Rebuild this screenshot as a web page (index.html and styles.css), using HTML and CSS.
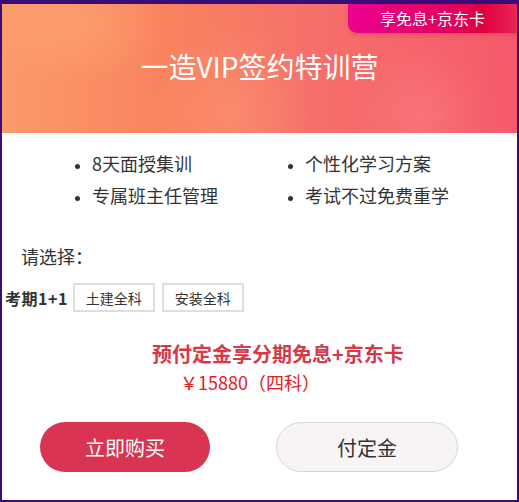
FILE: index.html
```html
<!DOCTYPE html>
<html lang="zh">
<head>
<meta charset="utf-8">
<link rel="stylesheet" href="styles.css">
</head>
<body>
<div class="card">
  <header class="hero">
    <div class="badge">享免息+京东卡</div>
    <h1 class="title">一造VIP签约特训营</h1>
  </header>
  <ul class="features">
    <li>8天面授集训</li>
    <li>个性化学习方案</li>
    <li>专属班主任管理</li>
    <li>考试不过免费重学</li>
  </ul>
  <div class="choose">请选择：</div>
  <div class="options">
    <span class="opt-label">考期1+1</span>
    <button class="opt">土建全科</button>
    <button class="opt">安装全科</button>
  </div>
  <div class="promo">预付定金享分期免息+京东卡</div>
  <div class="price">￥15880（四科）</div>
  <div class="actions">
    <button class="btn btn-buy">立即购买</button>
    <button class="btn btn-deposit">付定金</button>
  </div>
</div>
</body>
</html>
```
FILE: styles.css
```css
html, body {
  margin: 0;
  padding: 0;
}
body {
  background: #3a0c76;
  padding: 4px 2px 2px 2px;
  font-family: "Noto Sans CJK SC", "Noto Sans", sans-serif;
  color: #333;
}
.card {
  background: #fff;
  height: 496px;
  overflow: hidden;
}
.hero {
  position: relative;
  height: 129px;
  display: flex;
  align-items: center;
  justify-content: center;
  background:
    radial-gradient(ellipse 90px 60px at 75px 20px, rgba(255,175,120,0.45), rgba(255,175,120,0)),
    radial-gradient(ellipse 80px 90px at 230px 110px, rgba(255,190,140,0.25), rgba(255,190,140,0)),
    radial-gradient(ellipse 70px 70px at 420px 110px, rgba(255,160,160,0.25), rgba(255,160,160,0)),
    linear-gradient(90deg, #fb9a6a 0%, #f9845e 30%, #f6706a 60%, #f55a6a 100%);
}
.badge {
  position: absolute;
  top: 0;
  right: 0;
  width: 169px;
  height: 29px;
  border-bottom-left-radius: 9px;
  background: linear-gradient(90deg, #ec0090 0%, #e2005a 65%, #df0040 80%, #ea2555 100%);
  color: #fff;
  font-size: 16px;
  line-height: 29px;
  text-align: center;
  box-shadow: 0 2px 4px rgba(150, 30, 60, 0.25);
}
.title {
  margin: 0 0 6px 0;
  font-weight: 400;
  font-size: 28px;
  color: #fff;
}
.features {
  list-style: disc;
  margin: 14px 0 0 0;
  padding: 0 0 0 90px;
  display: grid;
  grid-template-columns: 213px auto;
  font-size: 18px;
  line-height: 32px;
  color: #333;
}
.features li::marker {
  font-size: 14px;
}
.choose {
  margin-top: 33px;
  padding-left: 19px;
  font-size: 18px;
  line-height: 24px;
  color: #333;
}
.options {
  margin-top: 15px;
  padding-left: 3px;
  display: flex;
  align-items: center;
  gap: 7px;
}
.opt-label {
  font-weight: 700;
  font-size: 16px;
  color: #333;
  margin-right: -2px;
  letter-spacing: 0.5px;
}
.opt {
  width: 82px;
  height: 29px;
  border: 2px solid #dedede;
  background: #fff;
  font-family: inherit;
  font-size: 14px;
  color: #333;
  padding: 0;
}
.promo {
  margin-top: 29px;
  padding-left: 150px;
  font-size: 20px;
  font-weight: 700;
  line-height: 26px;
  color: #d63a4a;
}
.price {
  margin-top: 3px;
  padding-left: 178px;
  font-size: 18px;
  line-height: 24px;
  color: #e3201f;
}
.actions {
  margin-top: 28px;
  display: flex;
  padding-left: 38px;
  gap: 66px;
}
.btn {
  height: 50px;
  border-radius: 25px;
  font-family: inherit;
  font-size: 20px;
  padding: 0;
}
.btn-buy {
  width: 170px;
  border: none;
  background: #d93452;
  color: #fff;
}
.btn-deposit {
  width: 182px;
  border: 1px solid #d9d5d5;
  background: #f8f4f4;
  color: #333;
}
```
